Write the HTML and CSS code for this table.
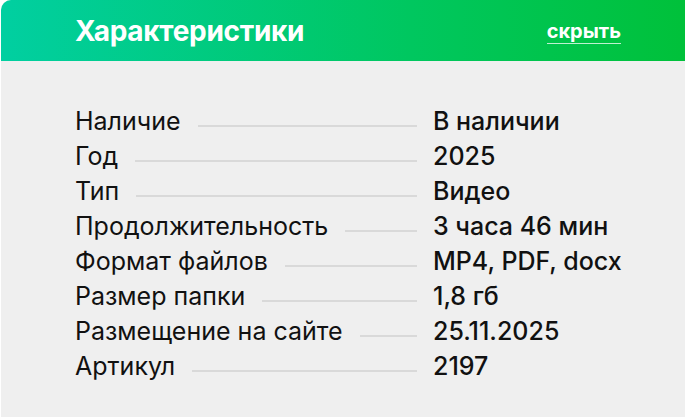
FILE: index.html
```html
<!DOCTYPE html>
<html lang="ru">
<head>
<meta charset="utf-8">
<link rel="stylesheet" href="styles.css">
</head>
<body>
<section class="card">
  <header class="card-head">
    <h2 class="card-title">Характеристики</h2>
    <a class="toggle" href="#">скрыть</a>
  </header>
  <div class="specs">
    <div class="row"><span class="label">Наличие</span><span class="dots"></span><span class="value">В наличии</span></div>
    <div class="row"><span class="label">Год</span><span class="dots"></span><span class="value">2025</span></div>
    <div class="row"><span class="label">Тип</span><span class="dots"></span><span class="value">Видео</span></div>
    <div class="row"><span class="label">Продолжительность</span><span class="dots"></span><span class="value">3 часа 46 мин</span></div>
    <div class="row"><span class="label">Формат файлов</span><span class="dots"></span><span class="value">MP4, PDF, docx</span></div>
    <div class="row"><span class="label">Размер папки</span><span class="dots"></span><span class="value">1,8 гб</span></div>
    <div class="row"><span class="label">Размещение на сайте</span><span class="dots"></span><span class="value">25.11.2025</span></div>
    <div class="row"><span class="label">Артикул</span><span class="dots"></span><span class="value">2197</span></div>
  </div>
</section>
</body>
</html>
```
FILE: styles.css
```css
html, body {
  margin: 0;
  padding: 0;
  background: #ffffff;
}
body {
  font-family: Inter, "Noto Sans", sans-serif;
  height: 417px;
  overflow: hidden;
}
.card {
  margin-left: 1px;
  background: #efefef;
  height: 417px;
  border-top-left-radius: 10px;
  overflow: hidden;
}
.card-head {
  height: 61px;
  display: flex;
  align-items: center;
  justify-content: space-between;
  padding: 0 64px 0 74px;
  background: linear-gradient(90deg, #01cfa1 0%, #00c75f 60%, #00c13a 100%);
}
.card-title {
  margin: 0;
  color: #ffffff;
  font-size: 28px;
  font-weight: 700;
  letter-spacing: -0.3px;
}
.toggle {
  color: #ffffff;
  font-size: 20px;
  font-weight: 700;
  text-decoration: none;
  border-bottom: 1px solid rgba(255, 255, 255, 0.75);
  line-height: 22px;
  padding-bottom: 1px;
  margin-top: 3px;
}
.specs {
  padding: 42px 0 0 74px;
}
.row {
  display: flex;
  align-items: center;
  width: 600px;
  height: 35px;
  font-size: 25px;
  color: #111111;
}
.label {
  white-space: nowrap;
}
.dots {
  flex: 1 1 auto;
  height: 2px;
  background: #d9d9d9;
  margin: 10px 16px 0 17px;
}
.value {
  flex: 0 0 242px;
  white-space: nowrap;
  font-weight: 500;
}
```
